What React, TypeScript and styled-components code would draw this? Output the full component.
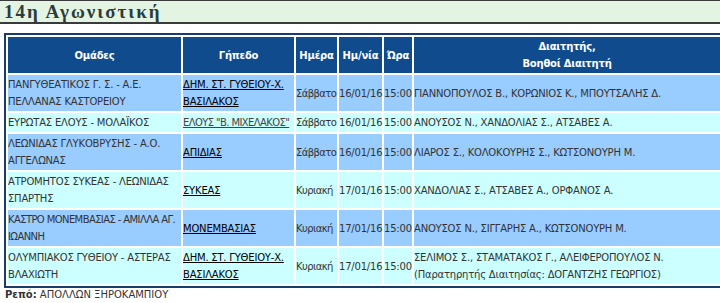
import React from "react";
import styled, { createGlobalStyle } from "styled-components";

const GlobalStyle = createGlobalStyle`
  html, body {
    margin: 0;
    padding: 0;
    background: #ffffff;
    overflow: hidden;
  }
  body {
    font-family: "DejaVu Sans", Verdana, sans-serif;
    font-size: 10px;
    color: #333333;
  }
`;

type Match = {
  teams: string[];
  field: string[];
  visited?: boolean;
  tightTeams?: boolean;
  tightField?: boolean;
  day: string;
  date: string;
  time: string;
  refs: string[];
};

const matches: Match[] = [
  {
    teams: ["ΠΑΝΓΥΘΕΑΤΙΚΟΣ Γ. Σ. - Α.Ε.", "ΠΕΛΛΑΝΑΣ ΚΑΣΤΟΡΕΙΟΥ"],
    field: ["ΔΗΜ. ΣΤ. ΓΥΘΕΙΟΥ-Χ.", "ΒΑΣΙΛΑΚΟΣ"],
    day: "Σάββατο",
    date: "16/01/16",
    time: "15:00",
    refs: ["ΓΙΑΝΝΟΠΟΥΛΟΣ Β., ΚΟΡΩΝΙΟΣ Κ., ΜΠΟΥΤΣΑΛΗΣ Δ."],
  },
  {
    teams: ["ΕΥΡΩΤΑΣ ΕΛΟΥΣ - ΜΟΛΑΪΚΟΣ"],
    field: ["ΕΛΟΥΣ \"Β. ΜΙΧΕΛΑΚΟΣ\""],
    visited: true,
    tightField: true,
    day: "Σάββατο",
    date: "16/01/16",
    time: "15:00",
    refs: ["ΑΝΟΥΣΟΣ Ν., ΧΑΝΔΟΛΙΑΣ Σ., ΑΤΣΑΒΕΣ Α."],
  },
  {
    teams: ["ΛΕΩΝΙΔΑΣ ΓΛΥΚΟΒΡΥΣΗΣ - Α.Ο.", "ΑΓΓΕΛΩΝΑΣ"],
    field: ["ΑΠΙΔΙΑΣ"],
    day: "Σάββατο",
    date: "16/01/16",
    time: "15:00",
    refs: ["ΛΙΑΡΟΣ Σ., ΚΟΛΟΚΟΥΡΗΣ Σ., ΚΩΤΣΟΝΟΥΡΗ Μ."],
  },
  {
    teams: ["ΑΤΡΟΜΗΤΟΣ ΣΥΚΕΑΣ - ΛΕΩΝΙΔΑΣ", "ΣΠΑΡΤΗΣ"],
    field: ["ΣΥΚΕΑΣ"],
    day: "Κυριακή",
    date: "17/01/16",
    time: "15:00",
    refs: ["ΧΑΝΔΟΛΙΑΣ Σ., ΑΤΣΑΒΕΣ Α., ΟΡΦΑΝΟΣ Α."],
  },
  {
    teams: ["ΚΑΣΤΡΟ ΜΟΝΕΜΒΑΣΙΑΣ - ΑΜΙΛΛΑ ΑΓ.", "ΙΩΑΝΝΗ"],
    tightTeams: true,
    field: ["ΜΟΝΕΜΒΑΣΙΑΣ"],
    day: "Κυριακή",
    date: "17/01/16",
    time: "15:00",
    refs: ["ΑΝΟΥΣΟΣ Ν., ΣΙΓΓΑΡΗΣ Α., ΚΩΤΣΟΝΟΥΡΗ Μ."],
  },
  {
    teams: ["ΟΛΥΜΠΙΑΚΟΣ ΓΥΘΕΙΟΥ - ΑΣΤΕΡΑΣ", "ΒΛΑΧΙΩΤΗ"],
    field: ["ΔΗΜ. ΣΤ. ΓΥΘΕΙΟΥ-Χ.", "ΒΑΣΙΛΑΚΟΣ"],
    day: "Κυριακή",
    date: "17/01/16",
    time: "15:00",
    refs: [
      "ΣΕΛΙΜΟΣ Σ., ΣΤΑΜΑΤΑΚΟΣ Γ., ΑΛΕΙΦΕΡΟΠΟΥΛΟΣ Ν.",
      "(Παρατηρητής Διαιτησίας: ΔΟΓΑΝΤΖΗΣ ΓΕΩΡΓΙΟΣ)",
    ],
  },
];

const Page = styled.div`
  width: 740px;
`;

const TitleBar = styled.h2`
  margin: 0;
  height: 21px;
  padding: 0 0 0 4px;
  background: #e4f4e2;
  border-top: 1px solid #3a3a3a;
  border-bottom: 2px solid #3a3a3a;
  font-family: "Liberation Serif", "DejaVu Serif", serif;
  font-weight: bold;
  font-size: 19px;
  line-height: 21px;
  letter-spacing: 2px;
  color: #2d3b3b;
`;

const Table = styled.table`
  margin: 9px 0 0 4px;
  width: 720px;
  table-layout: fixed;
  border: 2px solid #173d6b;
  border-collapse: separate;
  border-spacing: 2px;
  line-height: 17px;
  letter-spacing: -0.2px;
`;

const HeadCell = styled.th<{ $w?: number }>`
  box-sizing: border-box;
  width: ${(p) => (p.$w ? `${p.$w}px` : "auto")};
  padding: 1px 0;
  background: #104b8e;
  color: #ffffff;
  font-weight: bold;
  text-align: center;
  vertical-align: middle;
  white-space: nowrap;
`;

const Row = styled.tr<{ $alt: boolean }>`
  background: ${(p) => (p.$alt ? "#ccffff" : "#99ccff")};
`;

const Cell = styled.td<{ $tight?: boolean }>`
  box-sizing: border-box;
  padding: 1px 0 1px 0;
  vertical-align: middle;
  white-space: nowrap;
  color: #333333;
  letter-spacing: ${(p) => (p.$tight ? "-0.6px" : "inherit")};
`;

const FieldLink = styled.a<{ $visited?: boolean }>`
  color: ${(p) => (p.$visited ? "#444444" : "#000000")};
  text-decoration: underline;
`;

const Rest = styled.p`
  margin: 0 0 0 5px;
  line-height: 14px;
  color: #333333;
`;

const RestLabel = styled.b`
  color: #333333;
`;

const Lines = ({ lines }: { lines: string[] }) => (
  <>
    {lines.map((l, i) => (
      <React.Fragment key={i}>
        {i > 0 && <br />}
        {l}
      </React.Fragment>
    ))}
  </>
);

export default function App() {
  return (
    <Page>
      <GlobalStyle />
      <TitleBar>14η Αγωνιστική</TitleBar>
      <Table>
        <thead>
          <tr>
            <HeadCell $w={173}>Ομάδες</HeadCell>
            <HeadCell $w={111}>Γήπεδο</HeadCell>
            <HeadCell $w={41}>Ημέρα</HeadCell>
            <HeadCell $w={43}>Ημ/νία</HeadCell>
            <HeadCell $w={28}>Ώρα</HeadCell>
            <HeadCell>
              Διαιτητής,
              <br />
              Βοηθοί Διαιτητή
            </HeadCell>
          </tr>
        </thead>
        <tbody>
          {matches.map((m, i) => (
            <Row key={i} $alt={i % 2 === 1}>
              <Cell $tight={m.tightTeams}>
                <Lines lines={m.teams} />
              </Cell>
              <Cell $tight={m.tightField}>
                <FieldLink href="#" $visited={m.visited}>
                  <Lines lines={m.field} />
                </FieldLink>
              </Cell>
              <Cell $tight>{m.day}</Cell>
              <Cell>{m.date}</Cell>
              <Cell>{m.time}</Cell>
              <Cell>
                <Lines lines={m.refs} />
              </Cell>
            </Row>
          ))}
        </tbody>
      </Table>
      <Rest>
        <RestLabel>Ρεπό:</RestLabel> ΑΠΟΛΛΩΝ ΞΗΡΟΚΑΜΠΙΟΥ
      </Rest>
    </Page>
  );
}
